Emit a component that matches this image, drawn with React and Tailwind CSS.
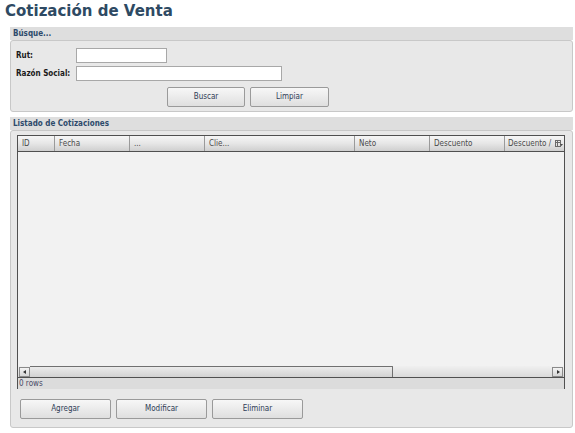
import React from "react";

const cols = [
  { label: "ID", w: 37 },
  { label: "Fecha", w: 75 },
  { label: "...", w: 75 },
  { label: "Clie...", w: 150 },
  { label: "Neto", w: 75 },
  { label: "Descuento", w: 75 },
];

function Btn({ children, w, h = "h-[20px]" }) {
  return (
    <button
      className={`${w} ${h} border border-[#9a9a9a] rounded-[2px] bg-gradient-to-b from-[#f7f7f7] to-[#dfdfdf] text-[8px] text-[#2f3d57] leading-none`}
    >
      {children}
    </button>
  );
}

function PanelHeader({ children }) {
  return (
    <div className="h-[13px] bg-[#dedede] pl-[3px] text-[8px] font-bold leading-[13px] text-[#2d4a6b]">
      {children}
    </div>
  );
}

export default function App() {
  return (
    <div className="w-[575px] h-[433px] bg-white font-['DejaVu_Sans_Condensed','DejaVu_Sans',sans-serif] overflow-hidden">
      <h1 className="h-[27px] pl-[5px] pt-[1px] text-[15px] font-bold leading-[20px] text-[#2e4a63] font-['DejaVu_Sans',sans-serif]">
        Cotización de Venta
      </h1>

      {/* Panel búsqueda */}
      <div className="ml-[10px] w-[563px]">
        <PanelHeader>Búsque...</PanelHeader>
        <div className="h-[72px] border border-[#c8c8c8] rounded-[3px] bg-[#e8e8e8] pt-[7px] pl-[5px]">
          <div className="flex items-center h-[15px]">
            <span className="w-[60px] text-[8px] font-bold text-[#1a1a1a]">Rut:</span>
            <div className="w-[91px] h-[15px] bg-white border border-[#a8a8a8]" />
          </div>
          <div className="flex items-center h-[15px] mt-[3px]">
            <span className="w-[60px] text-[8px] font-bold text-[#1a1a1a]">Razón Social:</span>
            <div className="w-[206px] h-[15px] bg-white border border-[#a8a8a8]" />
          </div>
          <div className="flex gap-[5px] mt-[6px] pl-[151px]">
            <Btn w="w-[78px]">Buscar</Btn>
            <Btn w="w-[79px]">Limpiar</Btn>
          </div>
        </div>
      </div>

      {/* Panel listado */}
      <div className="ml-[10px] w-[563px] mt-[5px]">
        <PanelHeader>Listado de Cotizaciones</PanelHeader>
        <div className="h-[298px] border border-[#c8c8c8] rounded-[3px] bg-[#e8e8e8] pt-[4px] pl-[6px]">
          <div className="w-[548px] h-[254px] flex flex-col border-x border-t border-[#505050]">
            {/* header */}
            <div className="relative flex h-[16px] border-b border-[#505050] bg-gradient-to-b from-[#f6f6f6] via-[#e6e6e6] to-[#cfcfcf] text-[8px] text-[#4a4a4a] leading-[15px]">
              {cols.map((c) => (
                <div
                  key={c.label}
                  style={{ width: c.w }}
                  className="shrink-0 border-r border-[#9a9a9a] pl-[4px] overflow-hidden whitespace-nowrap"
                >
                  {c.label}
                </div>
              ))}
              <div className="w-[47px] pl-[3px] overflow-hidden whitespace-nowrap">Descuento /</div>
              <div className="absolute right-0 top-0 h-[15px] w-[11px] flex items-center justify-center">
                <svg width="8" height="7" viewBox="0 0 8 7">
                  <rect x="0.5" y="0.5" width="5" height="6" fill="none" stroke="#6a6a6a" />
                  <line x1="0.5" y1="2.5" x2="5.5" y2="2.5" stroke="#6a6a6a" />
                  <line x1="2.5" y1="0.5" x2="2.5" y2="6.5" stroke="#6a6a6a" />
                  <path d="M5 4 L8 4 L6.5 6 Z" fill="#4a4a4a" />
                </svg>
              </div>
            </div>
            {/* body */}
            <div className="flex-1 bg-[#f2f2f2]" />
            {/* scrollbar */}
            <div className="flex items-center h-[12px] border-b border-[#505050] bg-gradient-to-b from-[#f0f0f0] to-[#dadada] px-[1px]">
              <div className="w-[11px] h-[10px] border border-[#8a8a8a] bg-gradient-to-b from-[#f4f4f4] to-[#d6d6d6] flex items-center justify-center">
                <svg width="4" height="4" viewBox="0 0 4 4"><path d="M3 0 L0 2 L3 4 Z" fill="#333" /></svg>
              </div>
              <div className="w-[363px] h-[11px] border-t border-r border-[#707070] rounded-tr-[1px] bg-gradient-to-b from-[#ebebeb] to-[#d2d2d2]" />
              <div className="flex-1" />
              <div className="w-[11px] h-[10px] border border-[#8a8a8a] bg-gradient-to-b from-[#f4f4f4] to-[#d6d6d6] flex items-center justify-center">
                <svg width="4" height="4" viewBox="0 0 4 4"><path d="M1 0 L4 2 L1 4 Z" fill="#333" /></svg>
              </div>
            </div>
            {/* footer */}
            <div className="h-[11px] bg-[#dcdcdc] pl-[1px] text-[8px] leading-[11px] text-[#4a4a66]">0 rows</div>
          </div>
          <div className="flex gap-[5px] mt-[10px] pl-[3px]">
            <Btn w="w-[91px]">Agregar</Btn>
            <Btn w="w-[91px]">Modificar</Btn>
            <Btn w="w-[91px]">Eliminar</Btn>
          </div>
        </div>
      </div>
    </div>
  );
}
